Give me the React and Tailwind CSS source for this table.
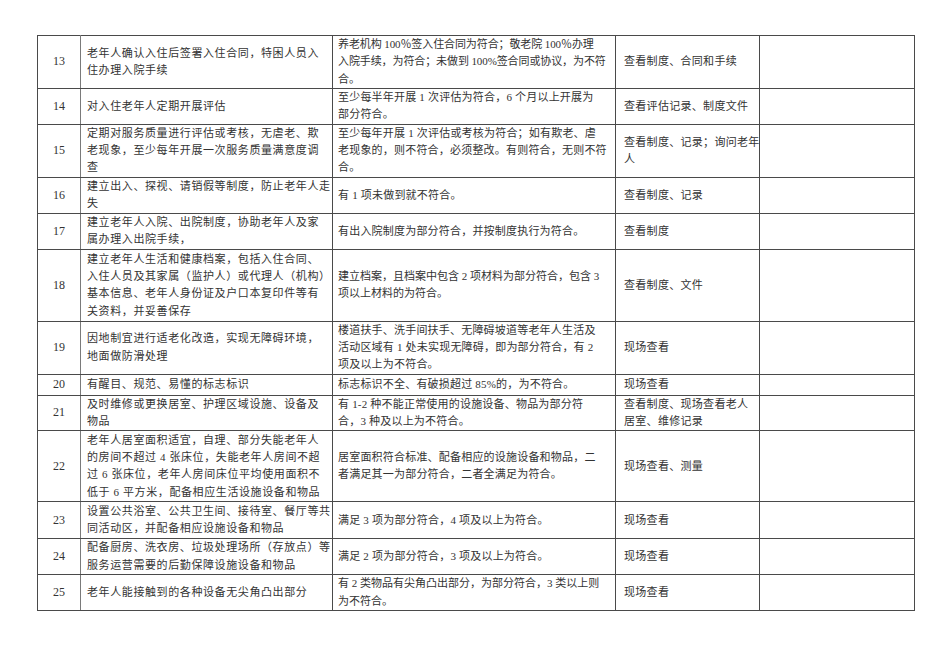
import React from 'react';

const rows = [
  {
    no: '13',
    h: 'h-[52px]',
    rt: 'tracking-[-0.1px]',
    item: ['老年人确认入住后签署入住合同，特困人员入', '住办理入院手续'],
    rule: ['养老机构 100％签入住合同为符合；敬老院 100％办理', '入院手续，为符合；未做到 100%签合同或协议，为不符', '合。'],
    way: ['查看制度、合同和手续'],
  },
  {
    no: '14',
    h: 'h-[36px]',
    item: ['对入住老年人定期开展评估'],
    rule: ['至少每半年开展 1 次评估为符合，6 个月以上开展为', '部分符合。'],
    way: ['查看评估记录、制度文件'],
  },
  {
    no: '15',
    h: 'h-[52px]',
    item: ['定期对服务质量进行评估或考核，无虐老、欺', '老现象，至少每年开展一次服务质量满意度调', '查'],
    rule: ['至少每年开展 1 次评估或考核为符合；如有欺老、虐', '老现象的，则不符合，必须整改。有则符合，无则不符', '合。'],
    way: ['查看制度、记录；询问老年', '人'],
  },
  {
    no: '16',
    h: 'h-[36px]',
    item: ['建立出入、探视、请销假等制度，防止老年人走', '失'],
    rule: ['有 1 项未做到就不符合。'],
    way: ['查看制度、记录'],
  },
  {
    no: '17',
    h: 'h-[36px]',
    item: ['建立老年人入院、出院制度，协助老年人及家', '属办理入出院手续，'],
    rule: ['有出入院制度为部分符合，并按制度执行为符合。'],
    way: ['查看制度'],
  },
  {
    no: '18',
    h: 'h-[72px]',
    rt: 'tracking-[0px]',
    item: ['建立老年人生活和健康档案，包括入住合同、', '入住人员及其家属（监护人）或代理人（机构）', '基本信息、老年人身份证及户口本复印件等有', '关资料，并妥善保存'],
    rule: ['建立档案，且档案中包含 2 项材料为部分符合，包含 3', '项以上材料的为符合。'],
    way: ['查看制度、文件'],
  },
  {
    no: '19',
    h: 'h-[52px]',
    item: ['因地制宜进行适老化改造，实现无障碍环境，', '地面做防滑处理'],
    rule: ['楼道扶手、洗手间扶手、无障碍坡道等老年人生活及', '活动区域有 1 处未实现无障碍，即为部分符合，有 2', '项及以上为不符合。'],
    way: ['现场查看'],
  },
  {
    no: '20',
    h: 'h-[21px]',
    item: ['有醒目、规范、易懂的标志标识'],
    rule: ['标志标识不全、有破损超过 85%的，为不符合。'],
    way: ['现场查看'],
  },
  {
    no: '21',
    h: 'h-[35px]',
    item: ['及时维修或更换居室、护理区域设施、设备及', '物品'],
    rule: ['有 1-2 种不能正常使用的设施设备、物品为部分符', '合，3 种及以上为不符合。'],
    way: ['查看制度、现场查看老人', '居室、维修记录'],
  },
  {
    no: '22',
    h: 'h-[71px]',
    item: ['老年人居室面积适宜，自理、部分失能老年人', '的房间不超过 4 张床位，失能老年人房间不超', '过 6 张床位，老年人房间床位平均使用面积不', '低于 6 平方米，配备相应生活设施设备和物品'],
    rule: ['居室面积符合标准、配备相应的设施设备和物品，二', '者满足其一为部分符合，二者全满足为符合。'],
    way: ['现场查看、测量'],
  },
  {
    no: '23',
    h: 'h-[37px]',
    item: ['设置公共浴室、公共卫生间、接待室、餐厅等共', '同活动区，并配备相应设施设备和物品'],
    rule: ['满足 3 项为部分符合，4 项及以上为符合。'],
    way: ['现场查看'],
  },
  {
    no: '24',
    h: 'h-[36px]',
    item: ['配备厨房、洗衣房、垃圾处理场所（存放点）等', '服务运营需要的后勤保障设施设备和物品'],
    rule: ['满足 2 项为部分符合，3 项及以上为符合。'],
    way: ['现场查看'],
  },
  {
    no: '25',
    h: 'h-[35px]',
    rt: 'tracking-[0px]',
    item: ['老年人能接触到的各种设备无尖角凸出部分'],
    rule: ['有 2 类物品有尖角凸出部分，为部分符合，3 类以上则', '为不符合。'],
    way: ['现场查看'],
  },
];

const Lines = ({ lines }) => (
  <>
    {lines.map((l, i) => (
      <div key={i} className="whitespace-nowrap">
        {l}
      </div>
    ))}
  </>
);

export default function App() {
  return (
    <div className="min-h-[672px] w-[950px] bg-white pl-[37px] pt-[35px] font-['Liberation_Serif','Noto_Sans_CJK_SC',serif] text-[11px] leading-[17.3px] tracking-[0.6px] text-[#333]">
      <table className="w-[877px] table-fixed border-collapse">
        <colgroup>
          <col className="w-[43px]" />
          <col className="w-[252px]" />
          <col className="w-[283px]" />
          <col className="w-[144px]" />
          <col className="w-[155px]" />
        </colgroup>
        <tbody>
          {rows.map((r) => (
            <tr key={r.no} className={r.h}>
              <td className="border border-[#4a4a4a] border-r-[#7a7a7a] p-0 text-center align-middle text-[12px] tracking-normal">
                {r.no}
              </td>
              <td className="border border-[#4a4a4a] py-0 pl-[6px] pr-[4px] align-middle">
                <Lines lines={r.item} />
              </td>
              <td className={`border border-[#4a4a4a] py-0 pl-[5px] pr-[2px] align-middle ${r.rt || 'tracking-[0.2px]'}`}>
                <Lines lines={r.rule} />
              </td>
              <td className="border border-[#4a4a4a] py-0 pl-[8px] pr-[2px] align-middle tracking-[0.3px]">
                <Lines lines={r.way} />
              </td>
              <td className="border border-[#4a4a4a] p-0" />
            </tr>
          ))}
        </tbody>
      </table>
    </div>
  );
}
